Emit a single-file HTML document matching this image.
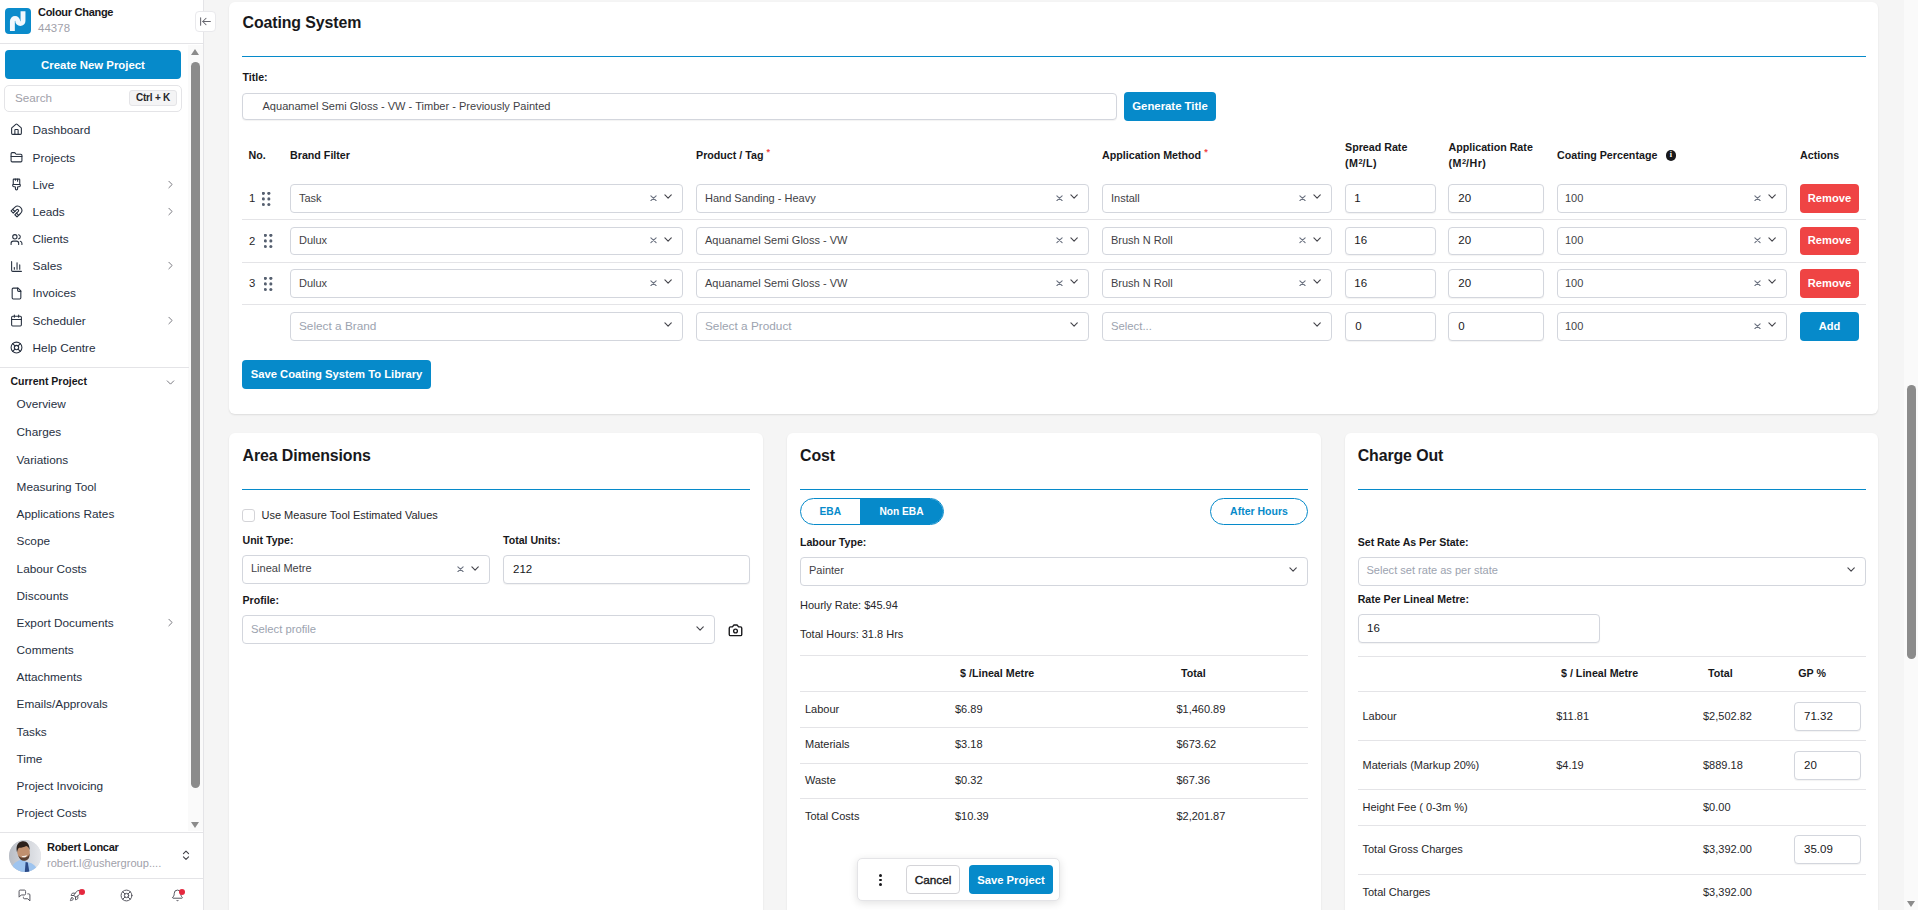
<!DOCTYPE html>
<html lang="en">
<head>
<meta charset="utf-8">
<title>Colour Change - Coating System</title>
<style>
*{box-sizing:border-box;margin:0;padding:0}
html,body{width:1918px;height:910px;overflow:hidden;background:#f5f5f5;font-family:"Liberation Sans",Arial,sans-serif;color:#1f2937;font-size:12px}
.abs{position:absolute}
.t{position:absolute;white-space:nowrap;line-height:14px;height:14px}
.b{font-weight:bold}
svg{display:block}
/* ---------- sidebar ---------- */
#sb{position:absolute;left:0;top:0;width:204px;height:910px;background:#fff;border-right:1px solid #e4e4e7}
#sbhead{position:absolute;left:0;top:0;width:203px;height:44px;border-bottom:1px solid #e4e4e7}
#logo{position:absolute;left:5px;top:8px;width:26px;height:26px;border-radius:4px;background:#0a8bcb;overflow:hidden}
#collapse{position:absolute;left:195px;top:11px;width:21px;height:21px;border:1px solid #e9e9ec;border-radius:4px;background:#fff;z-index:5}
#newproj{position:absolute;left:5px;top:50px;width:176px;height:29px;border-radius:4px;background:#068ACA;color:#fff;font-weight:bold;font-size:11.4px;text-align:center;line-height:30px}
#search{position:absolute;left:4px;top:85px;width:178px;height:27px;border:1px solid #e4e4e7;border-radius:5px;background:#fff}
#kbd{position:absolute;left:129px;top:90px;width:48px;height:16px;border:1px solid #e4e4e7;border-radius:3px;background:#f4f4f5;font-size:10px;letter-spacing:-.2px;font-weight:bold;text-align:center;line-height:14px;color:#27272a}
.nav{position:absolute;left:32.6px;font-size:11.8px;color:#27303f;line-height:16px;height:16px;white-space:nowrap}
.sub{position:absolute;left:16.6px;font-size:11.8px;color:#27303f;line-height:16px;height:16px;white-space:nowrap}
.ico{position:absolute;left:10px;width:13px;height:13px}
.ico svg,.chev svg,.bi svg{width:100%;height:100%;fill:none;stroke:#27303f;stroke-width:2;stroke-linecap:round;stroke-linejoin:round}
.chev{position:absolute;left:163.8px;width:13px;height:13px}
.chev svg{stroke:#66666e;stroke-width:1.6}
#sbtrack{position:absolute;left:188px;top:45px;width:15px;height:786px;background:#fafafa}
#sbthumb{position:absolute;left:191px;top:62px;width:9px;height:726px;border-radius:5px;background:#8b8b8b}
.tri-up{position:absolute;width:0;height:0;border-left:4.6px solid transparent;border-right:4.6px solid transparent;border-bottom:6.6px solid #8b8b8b}
.tri-dn{position:absolute;width:0;height:0;border-left:4.6px solid transparent;border-right:4.6px solid transparent;border-top:6.6px solid #8b8b8b}
.hr{position:absolute;height:1px;background:#e4e4e7}
.bi{position:absolute;top:889px;width:13px;height:13px}
.bi svg{stroke:#52525b;stroke-width:1.8}
.dot{position:absolute;width:6px;height:6px;border-radius:3px;background:#e5283e}
/* ---------- main ---------- */
.card{position:absolute;background:#fff;border-radius:6px;box-shadow:0 1px 2px rgba(0,0,0,.10)}
.h2{position:absolute;font-size:15.9px;font-weight:bold;color:#18181b;line-height:20px;white-space:nowrap;letter-spacing:-.1px}
.blue{position:absolute;height:1px;background:#068ACA}
.lbl{position:absolute;font-size:10.6px;font-weight:bold;color:#18181b;line-height:14px;white-space:nowrap}
.inp{position:absolute;border:1px solid #d3d6dd;border-radius:4px;background:#fff;box-shadow:0 1px 1px rgba(0,0,0,.05);font-size:11.5px;color:#18181b;white-space:nowrap;overflow:hidden}
.sel{position:absolute;border:1px solid #d3d6dd;border-radius:4px;background:#fff;font-size:11px;color:#3f3f46;white-space:nowrap;overflow:hidden}
.sel span,.inp span{position:absolute;left:8px;top:0}
.ph{color:#9ca3af}
.btn{position:absolute;border-radius:4px;color:#fff;font-weight:bold;font-size:12px;text-align:center;white-space:nowrap}
.bblue{background:#068ACA}
.bred{background:#ef4444}
.x{position:absolute;width:7px;height:6.5px}
.x svg{width:100%;height:100%;stroke:#6b7280;stroke-width:1.25;fill:none;stroke-linecap:round}
.dn{position:absolute;width:8.2px;height:5.45px}
.dn svg{width:100%;height:100%;stroke:#45454c;stroke-width:1.25;fill:none;stroke-linecap:round;stroke-linejoin:round}
.sep{position:absolute;height:1px;background:#e4e4e7}
.grip{position:absolute;width:9px;height:15px}
.grip i{position:absolute;width:2.7px;height:2.7px;border-radius:2px;background:#4b5563}
.td{position:absolute;font-size:11px;color:#27272a;line-height:14px;white-space:nowrap}
.th{position:absolute;font-size:10.7px;font-weight:bold;color:#18181b;line-height:14px;white-space:nowrap}
.sq{font-size:7.5px;position:relative;top:-3.5px;letter-spacing:0}
</style>
</head>
<body>
<!-- MAIN -->
<div id="main" class="abs" style="left:204px;top:0;width:1701px;height:910px;overflow:hidden">
<!--COATING-->
<div class="card" style="left:25px;top:2px;width:1649px;height:412px"></div>
<div class="h2" style="left:38.5px;top:12.5px">Coating System</div>
<div class="blue" style="left:38px;top:56px;width:1624.0px"></div>
<div class="lbl" style="left:38.5px;top:70.3px">Title:</div>
<div class="inp" style="left:38px;top:93px;width:875.0px;height:26.5px;line-height:24.5px;font-size:11.05px"><span style="color:#3f3f46;left:19.5px">Aquanamel Semi Gloss - VW - Timber - Previously Painted</span></div>
<div class="btn bblue" style="left:920px;top:92px;width:92.0px;height:28.5px;line-height:28.5px;font-size:11.35px">Generate Title</div>
<div class="th" style="left:44.5px;top:148.3px">No.</div>
<div class="th" style="left:86px;top:148.3px">Brand Filter</div>
<div class="th" style="left:492px;top:148.3px">Product / Tag <span style="color:#ef4444;font-size:9px;position:relative;top:-4px">*</span></div>
<div class="th" style="left:898px;top:148.3px">Application Method <span style="color:#ef4444;font-size:9px;position:relative;top:-4px">*</span></div>
<div class="th" style="left:1141px;top:139.8px">Spread Rate</div>
<div class="th" style="left:1141px;top:156.2px;letter-spacing:.45px">(M<span class="sq">2</span>/L)</div>
<div class="th" style="left:1244.5px;top:139.8px">Application Rate</div>
<div class="th" style="left:1244.5px;top:156.2px;letter-spacing:.45px">(M<span class="sq">2</span>/Hr)</div>
<div class="th" style="left:1353px;top:148.3px">Coating Percentage</div>
<div class="abs" style="left:1461.5px;top:150px;width:10.5px;height:10.5px;border-radius:6px;background:#18181b;color:#fff;font-size:8px;font-weight:bold;line-height:10.5px;text-align:center;font-family:'Liberation Serif',serif">i</div>
<div class="th" style="left:1596px;top:148.3px">Actions</div>
<div class="td" style="left:45px;top:191.2px;font-size:11.3px">1</div>
<svg class="abs" style="left:57.8px;top:191.7px" width="9" height="15" viewBox="0 0 9 15"><circle cx="1.35" cy="1.35" r="1.55" fill="#566070"/><circle cx="6.85" cy="1.35" r="1.55" fill="#566070"/><circle cx="1.35" cy="6.90" r="1.55" fill="#566070"/><circle cx="6.85" cy="6.90" r="1.55" fill="#566070"/><circle cx="1.35" cy="12.45" r="1.55" fill="#566070"/><circle cx="6.85" cy="12.45" r="1.55" fill="#566070"/></svg>
<div class="sel" style="left:86px;top:184px;width:393.0px;height:28.5px;line-height:26.5px"><span style="left:8px;top:0px">Task</span><div class="x" style="left:359.0px;top:9.7px"><svg viewBox="0 0 8 8" preserveAspectRatio="none"><path d="M1 1l6 6M7 1l-6 6"/></svg></div><div class="dn" style="left:372.75px;top:9.4px"><svg viewBox="0 0 9 6"><path d="M1 1l3.5 3.5L8 1"/></svg></div></div>
<div class="sel" style="left:492px;top:184px;width:393.0px;height:28.5px;line-height:26.5px"><span style="left:8px;top:0px">Hand Sanding - Heavy</span><div class="x" style="left:359.0px;top:9.7px"><svg viewBox="0 0 8 8" preserveAspectRatio="none"><path d="M1 1l6 6M7 1l-6 6"/></svg></div><div class="dn" style="left:372.75px;top:9.4px"><svg viewBox="0 0 9 6"><path d="M1 1l3.5 3.5L8 1"/></svg></div></div>
<div class="sel" style="left:898px;top:184px;width:230.0px;height:28.5px;line-height:26.5px"><span style="left:8px;top:0px">Install</span><div class="x" style="left:196.0px;top:9.7px"><svg viewBox="0 0 8 8" preserveAspectRatio="none"><path d="M1 1l6 6M7 1l-6 6"/></svg></div><div class="dn" style="left:209.75px;top:9.4px"><svg viewBox="0 0 9 6"><path d="M1 1l3.5 3.5L8 1"/></svg></div></div>
<div class="inp" style="left:1141px;top:184px;width:91.0px;height:28.5px;line-height:26.5px"><span style="left:8.3px">1</span></div>
<div class="inp" style="left:1244px;top:184px;width:96.0px;height:28.5px;line-height:26.5px"><span style="left:9.3px">20</span></div>
<div class="sel" style="left:1353px;top:184px;width:230.0px;height:28.5px;line-height:26.5px"><span style="left:7px;top:0px">100</span><div class="x" style="left:196.0px;top:9.7px"><svg viewBox="0 0 8 8" preserveAspectRatio="none"><path d="M1 1l6 6M7 1l-6 6"/></svg></div><div class="dn" style="left:209.75px;top:9.4px"><svg viewBox="0 0 9 6"><path d="M1 1l3.5 3.5L8 1"/></svg></div></div>
<div class="btn bred" style="left:1596px;top:184px;width:59.0px;height:28.5px;line-height:28.5px;font-size:11.15px">Remove</div>
<div class="td" style="left:45px;top:233.8px;font-size:11.3px">2</div>
<svg class="abs" style="left:59.7px;top:234.2px" width="9" height="15" viewBox="0 0 9 15"><circle cx="1.35" cy="1.35" r="1.55" fill="#566070"/><circle cx="6.85" cy="1.35" r="1.55" fill="#566070"/><circle cx="1.35" cy="6.90" r="1.55" fill="#566070"/><circle cx="6.85" cy="6.90" r="1.55" fill="#566070"/><circle cx="1.35" cy="12.45" r="1.55" fill="#566070"/><circle cx="6.85" cy="12.45" r="1.55" fill="#566070"/></svg>
<div class="sel" style="left:86px;top:227px;width:393.0px;height:27.5px;line-height:25.5px"><span style="left:8px;top:0px">Dulux</span><div class="x" style="left:359.0px;top:9.2px"><svg viewBox="0 0 8 8" preserveAspectRatio="none"><path d="M1 1l6 6M7 1l-6 6"/></svg></div><div class="dn" style="left:372.75px;top:8.9px"><svg viewBox="0 0 9 6"><path d="M1 1l3.5 3.5L8 1"/></svg></div></div>
<div class="sel" style="left:492px;top:227px;width:393.0px;height:27.5px;line-height:25.5px"><span style="left:8px;top:0px">Aquanamel Semi Gloss - VW</span><div class="x" style="left:359.0px;top:9.2px"><svg viewBox="0 0 8 8" preserveAspectRatio="none"><path d="M1 1l6 6M7 1l-6 6"/></svg></div><div class="dn" style="left:372.75px;top:8.9px"><svg viewBox="0 0 9 6"><path d="M1 1l3.5 3.5L8 1"/></svg></div></div>
<div class="sel" style="left:898px;top:227px;width:230.0px;height:27.5px;line-height:25.5px"><span style="left:8px;top:0px">Brush N Roll</span><div class="x" style="left:196.0px;top:9.2px"><svg viewBox="0 0 8 8" preserveAspectRatio="none"><path d="M1 1l6 6M7 1l-6 6"/></svg></div><div class="dn" style="left:209.75px;top:8.9px"><svg viewBox="0 0 9 6"><path d="M1 1l3.5 3.5L8 1"/></svg></div></div>
<div class="inp" style="left:1141px;top:227px;width:91.0px;height:27.5px;line-height:25.5px"><span style="left:8.3px">16</span></div>
<div class="inp" style="left:1244px;top:227px;width:96.0px;height:27.5px;line-height:25.5px"><span style="left:9.3px">20</span></div>
<div class="sel" style="left:1353px;top:227px;width:230.0px;height:27.5px;line-height:25.5px"><span style="left:7px;top:0px">100</span><div class="x" style="left:196.0px;top:9.2px"><svg viewBox="0 0 8 8" preserveAspectRatio="none"><path d="M1 1l6 6M7 1l-6 6"/></svg></div><div class="dn" style="left:209.75px;top:8.9px"><svg viewBox="0 0 9 6"><path d="M1 1l3.5 3.5L8 1"/></svg></div></div>
<div class="btn bred" style="left:1596px;top:227px;width:59.0px;height:27.5px;line-height:27.5px;font-size:11.15px">Remove</div>
<div class="td" style="left:45px;top:276.2px;font-size:11.3px">3</div>
<svg class="abs" style="left:59.7px;top:276.7px" width="9" height="15" viewBox="0 0 9 15"><circle cx="1.35" cy="1.35" r="1.55" fill="#566070"/><circle cx="6.85" cy="1.35" r="1.55" fill="#566070"/><circle cx="1.35" cy="6.90" r="1.55" fill="#566070"/><circle cx="6.85" cy="6.90" r="1.55" fill="#566070"/><circle cx="1.35" cy="12.45" r="1.55" fill="#566070"/><circle cx="6.85" cy="12.45" r="1.55" fill="#566070"/></svg>
<div class="sel" style="left:86px;top:269px;width:393.0px;height:28.5px;line-height:26.5px"><span style="left:8px;top:0px">Dulux</span><div class="x" style="left:359.0px;top:9.7px"><svg viewBox="0 0 8 8" preserveAspectRatio="none"><path d="M1 1l6 6M7 1l-6 6"/></svg></div><div class="dn" style="left:372.75px;top:9.4px"><svg viewBox="0 0 9 6"><path d="M1 1l3.5 3.5L8 1"/></svg></div></div>
<div class="sel" style="left:492px;top:269px;width:393.0px;height:28.5px;line-height:26.5px"><span style="left:8px;top:0px">Aquanamel Semi Gloss - VW</span><div class="x" style="left:359.0px;top:9.7px"><svg viewBox="0 0 8 8" preserveAspectRatio="none"><path d="M1 1l6 6M7 1l-6 6"/></svg></div><div class="dn" style="left:372.75px;top:9.4px"><svg viewBox="0 0 9 6"><path d="M1 1l3.5 3.5L8 1"/></svg></div></div>
<div class="sel" style="left:898px;top:269px;width:230.0px;height:28.5px;line-height:26.5px"><span style="left:8px;top:0px">Brush N Roll</span><div class="x" style="left:196.0px;top:9.7px"><svg viewBox="0 0 8 8" preserveAspectRatio="none"><path d="M1 1l6 6M7 1l-6 6"/></svg></div><div class="dn" style="left:209.75px;top:9.4px"><svg viewBox="0 0 9 6"><path d="M1 1l3.5 3.5L8 1"/></svg></div></div>
<div class="inp" style="left:1141px;top:269px;width:91.0px;height:28.5px;line-height:26.5px"><span style="left:8.3px">16</span></div>
<div class="inp" style="left:1244px;top:269px;width:96.0px;height:28.5px;line-height:26.5px"><span style="left:9.3px">20</span></div>
<div class="sel" style="left:1353px;top:269px;width:230.0px;height:28.5px;line-height:26.5px"><span style="left:7px;top:0px">100</span><div class="x" style="left:196.0px;top:9.7px"><svg viewBox="0 0 8 8" preserveAspectRatio="none"><path d="M1 1l6 6M7 1l-6 6"/></svg></div><div class="dn" style="left:209.75px;top:9.4px"><svg viewBox="0 0 9 6"><path d="M1 1l3.5 3.5L8 1"/></svg></div></div>
<div class="btn bred" style="left:1596px;top:269px;width:59.0px;height:28.5px;line-height:28.5px;font-size:11.15px">Remove</div>
<div class="sep" style="left:38px;top:219px;width:1624.0px"></div>
<div class="sep" style="left:38px;top:262px;width:1624.0px"></div>
<div class="sep" style="left:38px;top:304px;width:1624.0px"></div>
<div class="sel" style="left:86px;top:312px;width:393.0px;height:28.5px;line-height:26.5px;font-size:11.8px"><span class=ph style="left:8px;top:0px">Select a Brand</span><div class="dn" style="left:372.75px;top:9.4px"><svg viewBox="0 0 9 6"><path d="M1 1l3.5 3.5L8 1"/></svg></div></div>
<div class="sel" style="left:492px;top:312px;width:393.0px;height:28.5px;line-height:26.5px;font-size:11.8px"><span class=ph style="left:8px;top:0px">Select a Product</span><div class="dn" style="left:372.75px;top:9.4px"><svg viewBox="0 0 9 6"><path d="M1 1l3.5 3.5L8 1"/></svg></div></div>
<div class="sel" style="left:898px;top:312px;width:230.0px;height:28.5px;line-height:26.5px;font-size:11.3px"><span class=ph style="left:8px;top:0px">Select...</span><div class="dn" style="left:209.75px;top:9.4px"><svg viewBox="0 0 9 6"><path d="M1 1l3.5 3.5L8 1"/></svg></div></div>
<div class="inp" style="left:1141px;top:312px;width:91.0px;height:28.5px;line-height:26.5px"><span style="left:9.3px">0</span></div>
<div class="inp" style="left:1244px;top:312px;width:96.0px;height:28.5px;line-height:26.5px"><span style="left:9.3px">0</span></div>
<div class="sel" style="left:1353px;top:312px;width:230.0px;height:28.5px;line-height:26.5px"><span style="left:7px;top:0px">100</span><div class="x" style="left:196.0px;top:9.7px"><svg viewBox="0 0 8 8" preserveAspectRatio="none"><path d="M1 1l6 6M7 1l-6 6"/></svg></div><div class="dn" style="left:209.75px;top:9.4px"><svg viewBox="0 0 9 6"><path d="M1 1l3.5 3.5L8 1"/></svg></div></div>
<div class="btn bblue" style="left:1596px;top:312px;width:59.0px;height:28.5px;line-height:28.5px;font-size:11.1px">Add</div>
<div class="btn bblue" style="left:38px;top:360px;width:189.0px;height:28.5px;line-height:28.5px;font-size:11.25px">Save Coating System To Library</div>
<!--/COATING-->
<!--AREA-->
<div class="card" style="left:25px;top:433px;width:534px;height:487px"></div>
<div class="h2" style="left:38.5px;top:445.6px">Area Dimensions</div>
<div class="blue" style="left:38px;top:489px;width:508.0px"></div>
<div class="abs" style="left:38px;top:509px;width:12.5px;height:12.5px;border:1px solid #d4d4d8;border-radius:3px;background:#fff"></div>
<div class="td" style="left:57.5px;top:508.4px">Use Measure Tool Estimated Values</div>
<div class="lbl" style="left:38.5px;top:533.3px">Unit Type:</div>
<div class="lbl" style="left:299px;top:533.3px">Total Units:</div>
<div class="sel" style="left:38px;top:555px;width:248.0px;height:28.7px;line-height:26.7px"><span style="left:8px;top:-0.7px">Lineal Metre</span><div class="x" style="left:214.0px;top:9.8px"><svg viewBox="0 0 8 8" preserveAspectRatio="none"><path d="M1 1l6 6M7 1l-6 6"/></svg></div><div class="dn" style="left:227.75px;top:9.6px"><svg viewBox="0 0 9 6"><path d="M1 1l3.5 3.5L8 1"/></svg></div></div>
<div class="inp" style="left:299px;top:555px;width:247.0px;height:28.7px;line-height:26.7px"><span style="left:9px">212</span></div>
<div class="lbl" style="left:38.5px;top:593.3px">Profile:</div>
<div class="sel" style="left:38px;top:615px;width:473.0px;height:28.7px;line-height:26.7px;font-size:11.25px"><span class=ph style="left:8px;top:0px">Select profile</span><div class="dn" style="left:452.75px;top:9.6px"><svg viewBox="0 0 9 6"><path d="M1 1l3.5 3.5L8 1"/></svg></div></div>
<div class="abs" style="left:524px;top:623px;width:15px;height:14px"><svg viewBox="0 0 24 22" style="width:100%;height:100%;fill:none;stroke:#18181b;stroke-width:2.2;stroke-linecap:round;stroke-linejoin:round"><path d="M14.5 3h-5L7 6H4a2 2 0 0 0-2 2v10a2 2 0 0 0 2 2h16a2 2 0 0 0 2-2V8a2 2 0 0 0-2-2h-3z"/><circle cx="12" cy="12.500" r="3"/></svg></div>
<!--/AREA-->
<!--COST-->
<div class="card" style="left:583px;top:433px;width:534px;height:487px"></div>
<div class="h2" style="left:596px;top:445.6px">Cost</div>
<div class="blue" style="left:596px;top:489px;width:508.0px"></div>
<div class="abs" style="left:596px;top:497.5px;width:144px;height:27.5px;border:1px solid #068ACA;border-radius:14px;background:#fff;overflow:hidden"><div class="abs" style="left:58.5px;top:-1px;width:85px;height:27.5px;background:#068ACA"></div><div class="abs b" style="left:0;top:0;width:58.5px;text-align:center;line-height:25.5px;font-size:10.2px;color:#068ACA">EBA</div><div class="abs b" style="left:58.5px;top:0;width:84px;text-align:center;line-height:25.5px;font-size:10.2px;color:#fff">Non EBA</div></div>
<div class="abs b" style="left:1006px;top:497.5px;width:98px;height:27.5px;border:1px solid #068ACA;border-radius:14px;background:#fff;text-align:center;line-height:25.5px;font-size:10.5px;color:#068ACA">After Hours</div>
<div class="lbl" style="left:596px;top:535.0px">Labour Type:</div>
<div class="sel" style="left:596px;top:557px;width:508.0px;height:28.5px;line-height:26.5px"><span style="left:8px;top:-0.8px">Painter</span><div class="dn" style="left:487.75px;top:9.4px"><svg viewBox="0 0 9 6"><path d="M1 1l3.5 3.5L8 1"/></svg></div></div>
<div class="td" style="left:596px;top:597.8px">Hourly Rate: $45.94</div>
<div class="td" style="left:596px;top:627.0px">Total Hours: 31.8 Hrs</div>
<div class="sep" style="left:596px;top:655px;width:508.0px"></div>
<div class="sep" style="left:596px;top:691px;width:508.0px"></div>
<div class="sep" style="left:596px;top:727px;width:508.0px"></div>
<div class="sep" style="left:596px;top:763px;width:508.0px"></div>
<div class="sep" style="left:596px;top:798px;width:508.0px"></div>
<div class="th" style="left:756px;top:666.2px">$ /Lineal Metre</div>
<div class="th" style="left:977px;top:666.2px">Total</div>
<div class="td" style="left:601px;top:702.1px">Labour</div>
<div class="td" style="left:751px;top:702.1px">$6.89</div>
<div class="td" style="left:972.4px;top:702.1px">$1,460.89</div>
<div class="td" style="left:601px;top:737.2px">Materials</div>
<div class="td" style="left:751px;top:737.2px">$3.18</div>
<div class="td" style="left:972.4px;top:737.2px">$673.62</div>
<div class="td" style="left:601px;top:773.0px">Waste</div>
<div class="td" style="left:751px;top:773.0px">$0.32</div>
<div class="td" style="left:972.4px;top:773.0px">$67.36</div>
<div class="td" style="left:601px;top:809.3px">Total Costs</div>
<div class="td" style="left:751px;top:809.3px">$10.39</div>
<div class="td" style="left:972.4px;top:809.3px">$2,201.87</div>
<!--/COST-->
<!--CHARGE-->
<div class="card" style="left:1141px;top:433px;width:533px;height:487px"></div>
<div class="h2" style="left:1153.7px;top:445.6px">Charge Out</div>
<div class="blue" style="left:1154px;top:489px;width:508.0px"></div>
<div class="lbl" style="left:1153.7px;top:534.9px">Set Rate As Per State:</div>
<div class="sel" style="left:1154px;top:557px;width:508.0px;height:28.5px;line-height:26.5px;font-size:11.06px"><span class=ph style="left:7.5px;top:-0.8px">Select set rate as per state</span><div class="dn" style="left:487.75px;top:9.4px"><svg viewBox="0 0 9 6"><path d="M1 1l3.5 3.5L8 1"/></svg></div></div>
<div class="lbl" style="left:1153.7px;top:592.4px">Rate Per Lineal Metre:</div>
<div class="inp" style="left:1154px;top:614px;width:242.0px;height:28.5px;line-height:26.5px"><span style="left:8px">16</span></div>
<div class="sep" style="left:1154px;top:656px;width:508.0px"></div>
<div class="sep" style="left:1154px;top:691px;width:508.0px"></div>
<div class="sep" style="left:1154px;top:740px;width:508.0px"></div>
<div class="sep" style="left:1154px;top:789px;width:508.0px"></div>
<div class="sep" style="left:1154px;top:825px;width:508.0px"></div>
<div class="sep" style="left:1154px;top:874px;width:508.0px"></div>
<div class="th" style="left:1357px;top:666.2px">$ / Lineal Metre</div>
<div class="th" style="left:1504px;top:666.2px">Total</div>
<div class="th" style="left:1594.3px;top:666.2px">GP %</div>
<div class="td" style="left:1158.5px;top:709.0px">Labour</div>
<div class="td" style="left:1352.2px;top:709.0px">$11.81</div>
<div class="td" style="left:1499px;top:709.0px">$2,502.82</div>
<div class="inp" style="left:1590px;top:702px;width:67.0px;height:28.5px;line-height:26.5px"><span style="left:9px">71.32</span></div>
<div class="td" style="left:1158.5px;top:758.0px">Materials (Markup 20%)</div>
<div class="td" style="left:1352.2px;top:758.0px">$4.19</div>
<div class="td" style="left:1499px;top:758.0px">$889.18</div>
<div class="inp" style="left:1590px;top:751px;width:67.0px;height:28.5px;line-height:26.5px"><span style="left:9px">20</span></div>
<div class="td" style="left:1158.5px;top:800.4px">Height Fee ( 0-3m %)</div>
<div class="td" style="left:1499px;top:800.4px">$0.00</div>
<div class="td" style="left:1158.5px;top:842.1px">Total Gross Charges</div>
<div class="td" style="left:1499px;top:842.1px">$3,392.00</div>
<div class="inp" style="left:1590px;top:835.1px;width:67.0px;height:28.5px;line-height:26.5px"><span style="left:9px">35.09</span></div>
<div class="td" style="left:1158.5px;top:885.3px">Total Charges</div>
<div class="td" style="left:1499px;top:885.3px">$3,392.00</div>
<!--/CHARGE-->
<!--FLOAT-->
<div class="abs" style="left:653px;top:857.5px;width:203px;height:43px;border-radius:5px;background:#fff;border:1px solid #e4e4e7;box-shadow:0 2px 8px rgba(0,0,0,.12)"></div>
<div class="abs" style="left:675px;top:874.4px;width:2.6px;height:2.6px;border-radius:2px;background:#18181b"></div>
<div class="abs" style="left:675px;top:878.8px;width:2.6px;height:2.6px;border-radius:2px;background:#18181b"></div>
<div class="abs" style="left:675px;top:883.2px;width:2.6px;height:2.6px;border-radius:2px;background:#18181b"></div>
<div class="abs b" style="left:702px;top:865px;width:54px;height:29px;border:1px solid #d4d4d8;border-radius:4px;background:#fff;text-align:center;line-height:29.5px;font-size:11.8px;font-weight:normal;-webkit-text-stroke:.35px #18181b;color:#18181b">Cancel</div>
<div class="btn bblue" style="left:765px;top:865px;width:84.0px;height:29.0px;line-height:29.0px;font-size:11.25px;line-height:30.5px">Save Project</div>
<!--/FLOAT-->
</div>
<!-- page scrollbar -->
<div class="abs" style="left:1904px;top:0;width:14px;height:910px;background:#fafafa"></div>
<div class="abs" style="left:1907px;top:385px;width:9px;height:274px;border-radius:5px;background:#8b8b8b"></div>
<div class="tri-dn" style="left:1906.500px;top:900.5px"></div>
<!-- SIDEBAR -->
<div id="sb">
<!--SIDEBAR-->
<div id="sbhead"><div id="logo"><svg viewBox="0 0 26 26" width="26" height="26"><path d="M7.4 23V13a2.65 2.65 0 0 1 5.3 0a2.65 2.65 0 0 0 5.3 0V3.2" fill="none" stroke="#f1f8fd" stroke-width="4.9"/></svg></div>
<div class="t b" style="left:38px;top:5px;font-size:11px;letter-spacing:-.28px;color:#18181b">Colour Change</div>
<div class="t" style="left:38px;top:21px;font-size:11.4px;color:#a1a1aa;letter-spacing:.1px">44378</div></div>
<div id="collapse"><div class="abs" style="left:3px;top:3px;width:13px;height:13px"><svg viewBox="0 0 24 24" style="width:100%;height:100%;fill:none;stroke:#66666e;stroke-width:1.9;stroke-linecap:round;stroke-linejoin:round"><path d="M3 19V5"/><path d="m13 6-6 6 6 6"/><path d="M7 12h14"/></svg></div></div>
<div id="sbtrack"></div><div class="tri-up" style="left:190.900px;top:49.2px"></div><div id="sbthumb"></div><div class="tri-dn" style="left:190.900px;top:821.5px"></div>
<div id="newproj">Create New Project</div>
<div id="search"></div><div class="t" style="left:15px;top:91px;font-size:11.7px;color:#a1a1aa">Search</div><div id="kbd">Ctrl + K</div>
<div class="ico" style="top:122.8px"><svg viewBox="0 0 24 24"><path d="M15 21v-8a1 1 0 0 0-1-1h-4a1 1 0 0 0-1 1v8"/><path d="M3 10a2 2 0 0 1 .709-1.528l7-5.999a2 2 0 0 1 2.582 0l7 5.999A2 2 0 0 1 21 10v9a2 2 0 0 1-2 2H5a2 2 0 0 1-2-2z"/></svg></div><div class="nav" style="top:122.0px">Dashboard</div>
<div class="ico" style="top:150.8px"><svg viewBox="0 0 24 24"><path d="M20 20a2 2 0 0 0 2-2V8a2 2 0 0 0-2-2h-7.9a2 2 0 0 1-1.69-.9L9.6 3.9A2 2 0 0 0 7.93 3H4a2 2 0 0 0-2 2v13a2 2 0 0 0 2 2Z"/><path d="M2 10h20"/></svg></div><div class="nav" style="top:150.0px">Projects</div>
<div class="ico" style="top:177.8px"><svg viewBox="0 0 24 24"><path d="M10 2v2"/><path d="M14 2v4"/><path d="M17 2a1 1 0 0 1 1 1v9H6V3a1 1 0 0 1 1-1z"/><path d="M6 12a1 1 0 0 0-1 1v1a2 2 0 0 0 2 2h2a1 1 0 0 1 1 1v2.9a2 2 0 1 0 4 0V17a1 1 0 0 1 1-1h2a2 2 0 0 0 2-2v-1a1 1 0 0 0-1-1"/></svg></div><div class="nav" style="top:177.0px">Live</div>
<div class="chev" style="top:177.8px"><svg viewBox="0 0 24 24"><path d="m9 18 6-6-6-6"/></svg></div>
<div class="ico" style="top:204.8px"><svg viewBox="0 0 24 24"><path d="m6 15-4-4 6.75-6.77a7.79 7.79 0 0 1 11 11L13 22l-4-4 6.39-6.36a2.14 2.14 0 0 0-3-3L6 15"/><path d="m5 8 4 4"/><path d="m12 15 4 4"/></svg></div><div class="nav" style="top:204.0px">Leads</div>
<div class="chev" style="top:204.8px"><svg viewBox="0 0 24 24"><path d="m9 18 6-6-6-6"/></svg></div>
<div class="ico" style="top:232.8px"><svg viewBox="0 0 24 24"><path d="M16 21v-2a4 4 0 0 0-4-4H6a4 4 0 0 0-4 4v2"/><circle cx="9" cy="7" r="4"/><path d="M22 21v-2a4 4 0 0 0-3-3.87"/><path d="M16 3.13a4 4 0 0 1 0 7.75"/></svg></div><div class="nav" style="top:231.2px">Clients</div>
<div class="ico" style="top:259.9px"><svg viewBox="0 0 24 24"><path d="M3 3v16a2 2 0 0 0 2 2h16"/><path d="M18 17V9"/><path d="M13 17V5"/><path d="M8 17v-3"/></svg></div><div class="nav" style="top:258.3px">Sales</div>
<div class="chev" style="top:259.1px"><svg viewBox="0 0 24 24"><path d="m9 18 6-6-6-6"/></svg></div>
<div class="ico" style="top:286.7px"><svg viewBox="0 0 24 24"><path d="M15 2H6a2 2 0 0 0-2 2v16a2 2 0 0 0 2 2h12a2 2 0 0 0 2-2V7Z"/><path d="M14 2v4a2 2 0 0 0 2 2h4"/></svg></div><div class="nav" style="top:285.2px">Invoices</div>
<div class="ico" style="top:313.8px"><svg viewBox="0 0 24 24"><path d="M8 2v4"/><path d="M16 2v4"/><rect width="18" height="18" x="3" y="4" rx="2"/><path d="M3 10h18"/></svg></div><div class="nav" style="top:313.0px">Scheduler</div>
<div class="chev" style="top:313.8px"><svg viewBox="0 0 24 24"><path d="m9 18 6-6-6-6"/></svg></div>
<div class="ico" style="top:340.6px"><svg viewBox="0 0 24 24"><circle cx="12" cy="12" r="10"/><path d="m4.93 4.93 4.24 4.24"/><path d="m14.83 9.17 4.24-4.24"/><path d="m14.83 14.83 4.24 4.24"/><path d="m9.17 14.83-4.24 4.24"/><circle cx="12" cy="12" r="4"/></svg></div><div class="nav" style="top:339.8px">Help Centre</div>
<div class="hr" style="left:0;top:367px;width:189px"></div>
<div class="t b" style="left:10.500px;top:374.200px;font-size:10.500px;color:#18181b">Current Project</div>
<div class="chev" style="top:376px"><svg viewBox="0 0 24 24"><path d="m6 9 6 6 6-6"/></svg></div>
<div class="sub" style="top:396px">Overview</div>
<div class="sub" style="top:424px">Charges</div>
<div class="sub" style="top:452px">Variations</div>
<div class="sub" style="top:479px">Measuring Tool</div>
<div class="sub" style="top:506px">Applications Rates</div>
<div class="sub" style="top:533px">Scope</div>
<div class="sub" style="top:561px">Labour Costs</div>
<div class="sub" style="top:588px">Discounts</div>
<div class="sub" style="top:615px">Export Documents</div>
<div class="chev" style="top:615.7px"><svg viewBox="0 0 24 24"><path d="m9 18 6-6-6-6"/></svg></div>
<div class="sub" style="top:642px">Comments</div>
<div class="sub" style="top:669px">Attachments</div>
<div class="sub" style="top:696px">Emails/Approvals</div>
<div class="sub" style="top:724px">Tasks</div>
<div class="sub" style="top:751px">Time</div>
<div class="sub" style="top:778px">Project Invoicing</div>
<div class="sub" style="top:805px">Project Costs</div>
<div class="hr" style="left:0;top:832px;width:203px"></div>
<div class="abs" style="left:9px;top:840px;width:32px;height:32px;border-radius:16px;overflow:hidden;background:#d9dde2"><svg viewBox="0 0 32 32" width="32" height="32"><defs><linearGradient id="avbg" x1="0" x2="1" y1="0" y2="0"><stop offset="0" stop-color="#b9bdc5"/><stop offset="1" stop-color="#e6e8ec"/></linearGradient></defs><rect width="32" height="32" fill="url(#avbg)"/><path d="M2 32c.5-7 4-10.500 10-12.200l7 2.400c5 .8 8.500 4 10 9.800z" fill="#9ec4ef"/><path d="M16.600 22l2.200.6 1.600 9.400h-4.600z" fill="#2c4a86"/><g transform="rotate(-9 14.500 12.500)"><ellipse cx="14.600" cy="12" rx="6.300" ry="8" fill="#c0906f"/><path d="M8.100 11.500C7.600 4.500 11 1.200 15 1.200c4.200 0 7 3 6 10-.5-2.600-1.400-4-2.800-4.600-2.400 1-5.600 1-7.400.6-1.200.8-2 2.200-2.700 4.300z" fill="#2b201b"/><path d="M8.800 14.500c.6 4.600 2.800 6.400 5.800 6.400s5.200-1.800 5.800-6.400c-1 2.200-2.700 3.100-5.800 3.100s-4.800-.9-5.800-3.100z" fill="#5a4032"/><path d="M12 15.400c1.600.8 3.800.8 5.400 0-.4 1.400-1.500 2-2.700 2s-2.300-.6-2.700-2z" fill="#f4f0ec"/></g></svg></div>
<div class="t b" style="left:47px;top:840.3px;font-size:11px;letter-spacing:-.28px;color:#18181b">Robert Loncar</div>
<div class="t" style="left:47px;top:856px;font-size:11.1px;color:#a1a1aa">robert.l@ushergroup....</div>
<div class="abs" style="left:182.400px;top:850px;width:8px;height:10.500px"><svg viewBox="0 0 8 11" style="width:100%;height:100%;fill:none;stroke:#3f3f46;stroke-width:1.150;stroke-linecap:round;stroke-linejoin:round"><path d="M1.300 3.800L4 1.100l2.700 2.700"/><path d="M1.300 7.200L4 9.900l2.700-2.700"/></svg></div>
<div class="hr" style="left:0;top:878px;width:203px"></div>
<div class="bi" style="left:18px"><svg viewBox="0 0 24 24"><path d="M14 9a2 2 0 0 1-2 2H6l-4 4V4a2 2 0 0 1 2-2h8a2 2 0 0 1 2 2z"/><path d="M18 9h2a2 2 0 0 1 2 2v11l-4-4h-6a2 2 0 0 1-2-2v-1"/></svg></div>
<div class="bi" style="left:69px"><svg viewBox="0 0 24 24"><path d="M4.5 16.5c-1.5 1.26-2 5-2 5s3.74-.5 5-2c.71-.84.7-2.13-.09-2.91a2.18 2.18 0 0 0-2.91-.09z"/><path d="m12 15-3-3a22 22 0 0 1 2-3.95A12.88 12.88 0 0 1 22 2c0 2.72-.78 7.5-6 11a22.35 22.35 0 0 1-4 2z"/><path d="M9 12H4s.55-3.03 2-4c1.62-1.08 5 0 5 0"/><path d="M12 15v5s3.03-.55 4-2c1.08-1.62 0-5 0-5"/></svg></div>
<div class="bi" style="left:120px"><svg viewBox="0 0 24 24"><circle cx="12" cy="12" r="10"/><path d="m4.93 4.93 4.24 4.24"/><path d="m14.83 9.17 4.24-4.24"/><path d="m14.83 14.83 4.24 4.24"/><path d="m9.17 14.83-4.24 4.24"/><circle cx="12" cy="12" r="4"/></svg></div>
<div class="bi" style="left:171px"><svg viewBox="0 0 24 24"><path d="M10.268 21a2 2 0 0 0 3.464 0"/><path d="M3.262 15.326A1 1 0 0 0 4 17h16a1 1 0 0 0 .74-1.673C19.41 13.956 18 12.499 18 8A6 6 0 0 0 6 8c0 4.499-1.411 5.956-2.738 7.326"/></svg></div>
<div class="dot" style="left:79px;top:889px"></div><div class="dot" style="left:179px;top:889px"></div>
<!--/SIDEBAR-->
</div>
</body>
</html>
